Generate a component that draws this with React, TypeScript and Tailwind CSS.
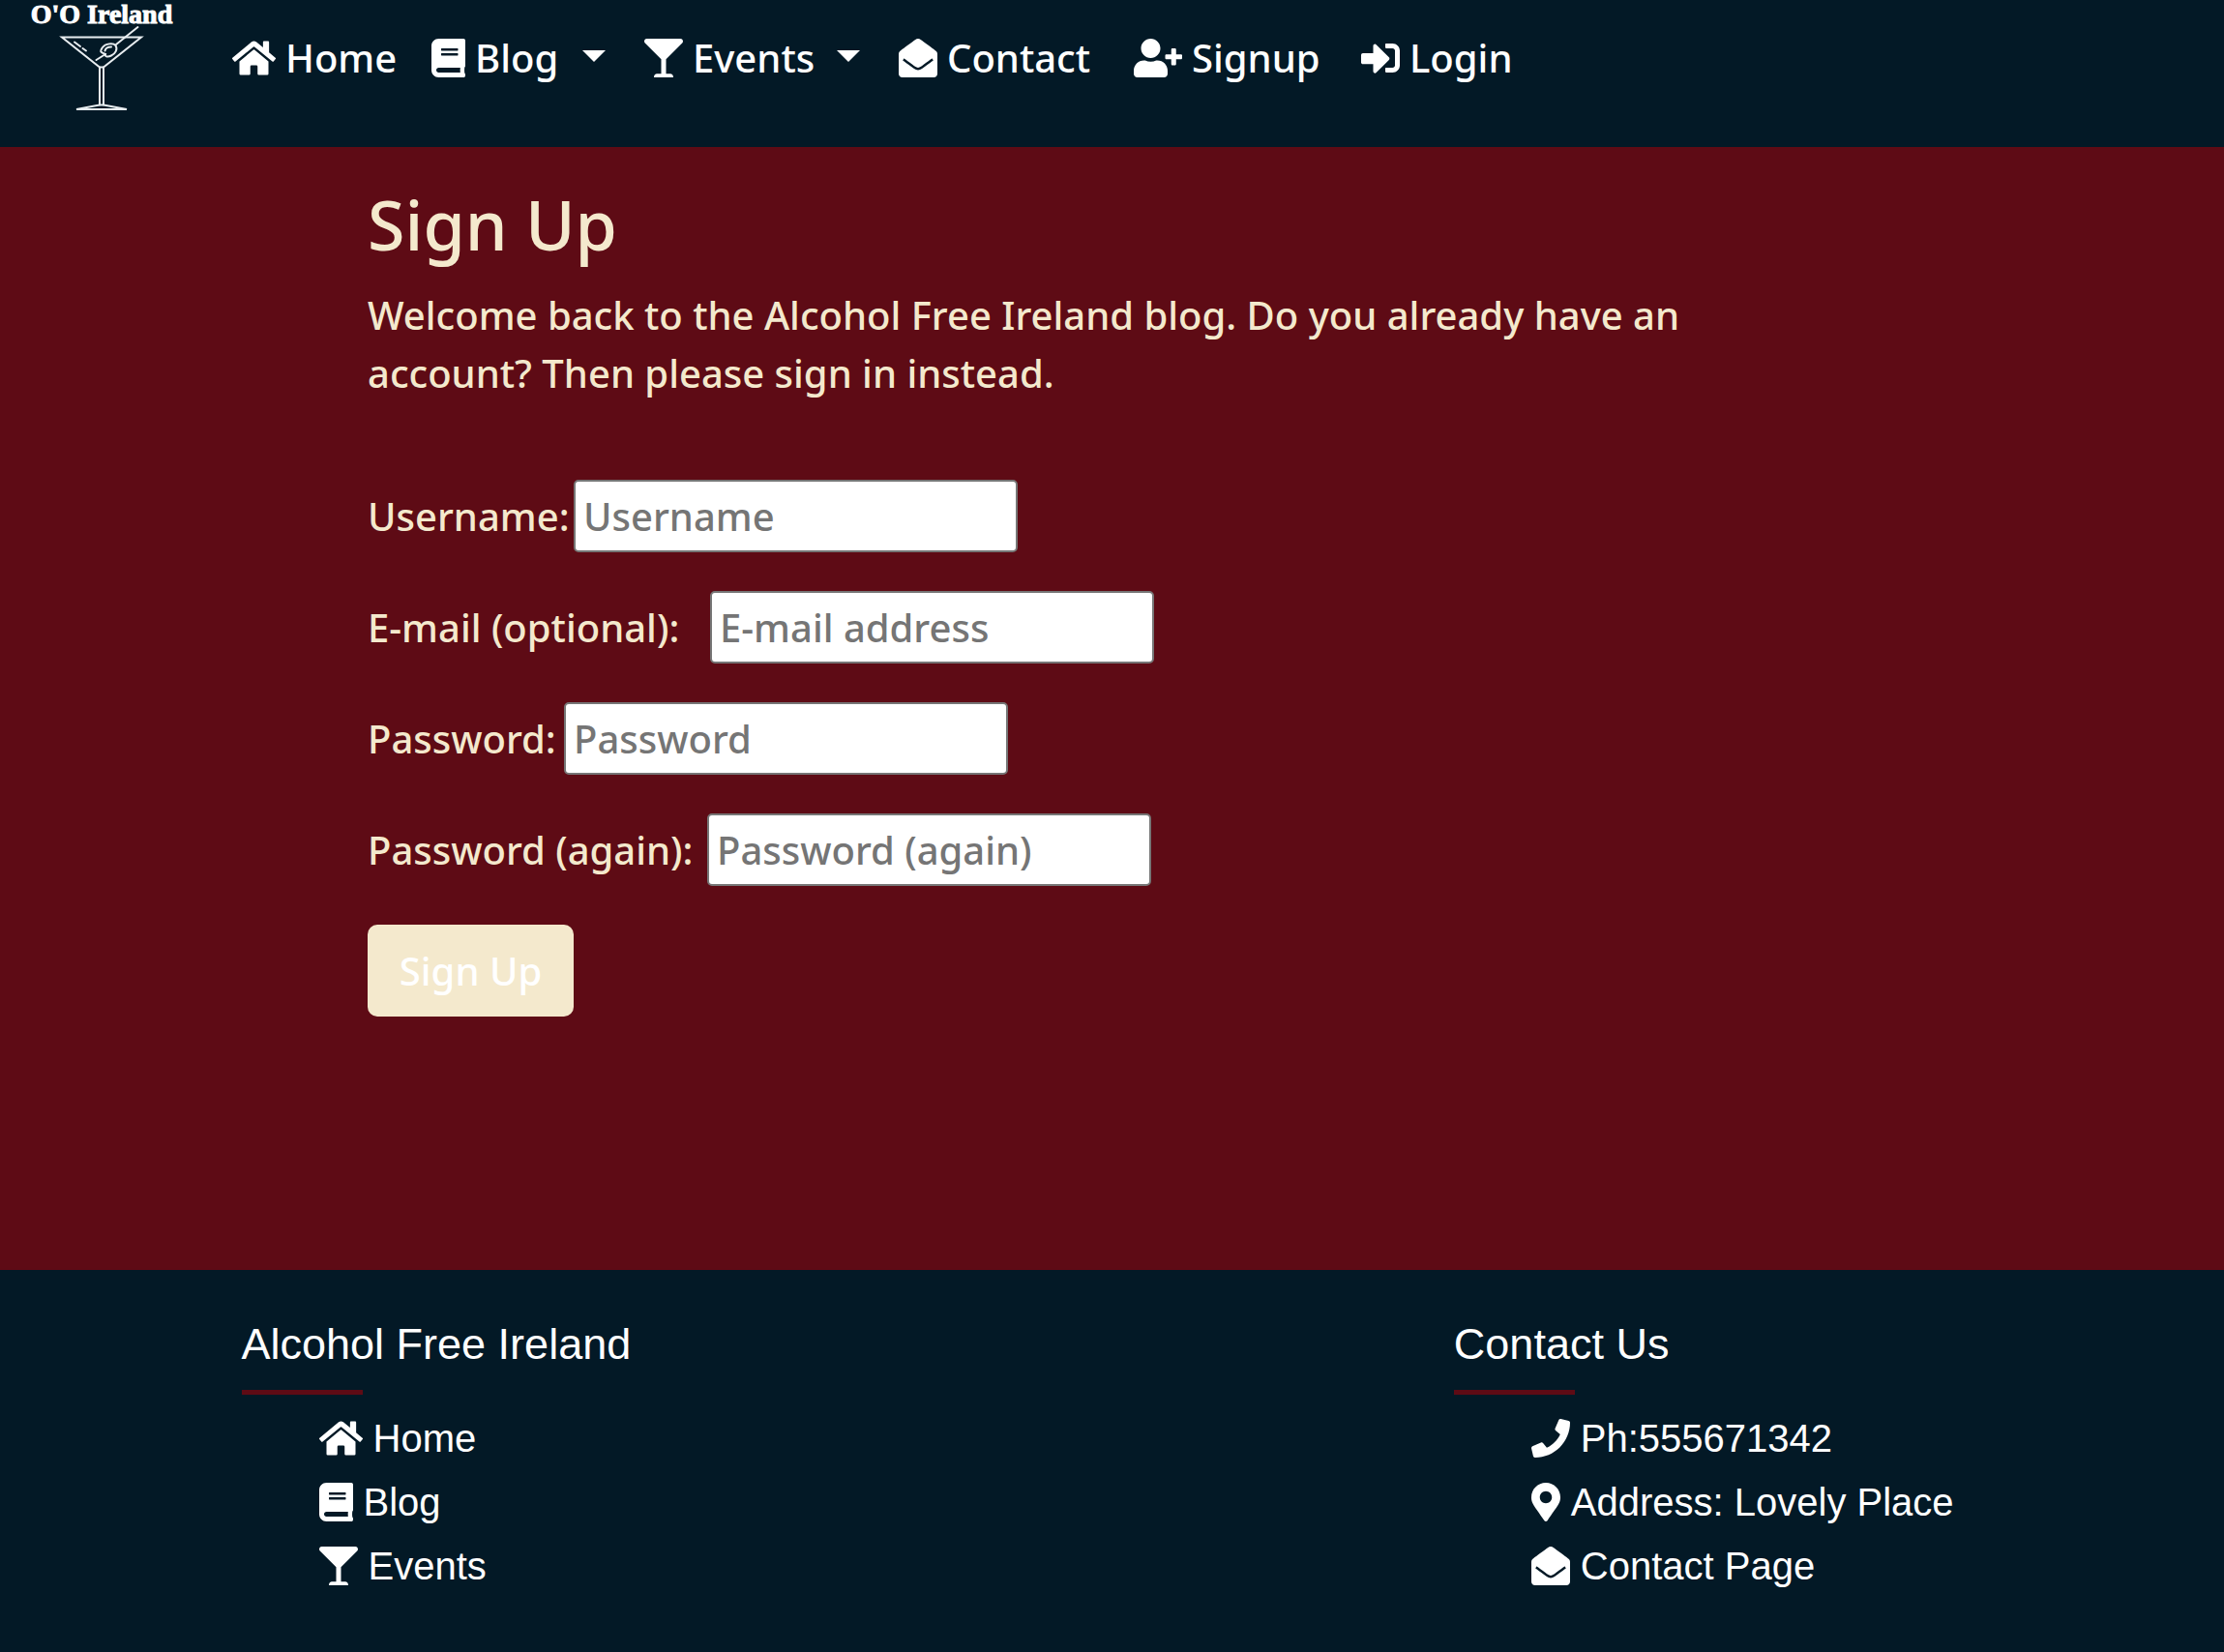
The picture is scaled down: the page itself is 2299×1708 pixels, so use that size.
import type { ReactNode } from "react";
import {
  FaBook,
  FaEnvelopeOpen,
  FaGlassMartini,
  FaHome,
  FaMapMarkerAlt,
  FaPhone,
  FaSignInAlt,
  FaUserPlus,
} from "react-icons/fa";

function Logo() {
  return (
    <svg viewBox="0 0 160 120" className="h-[120px] w-[160px]" role="img" aria-label="O'O Ireland">
      <text
        x="75"
        y="24"
        textAnchor="middle"
        fill="#fff"
        stroke="#fff"
        strokeWidth="1"
        fontFamily="'Liberation Serif', serif"
        fontWeight="700"
        fontSize="28"
      >
        O'O Ireland
      </text>
      <g fill="none" stroke="#e8edf0" strokeWidth="2" strokeLinejoin="miter" strokeLinecap="round">
        <path d="M34 38.500H116L77 69.500H73Z" />
        <path d="M73 69.500V108.500M77 69.500V108.500" />
        <path d="M73 108.500L49 113H101L77 108.500Z" />
        <path d="M47 43.500L53 48M55.500 50L59 52.500" />
        <path d="M112.500 28L90 46M79 56L69.500 62" />
        <path d="M79 56C72 54 74 52 76 49C79 45 87 44 89.500 47C92 51 89 56 85 57.500C82 59 78 59 79 56Z" />
        <path d="M78.500 52.500C79 50 82 48.500 85 48.500" />
      </g>
    </svg>
  );
}

function Caret() {
  return (
    <svg viewBox="0 0 24 12" className="mb-1 ml-auto h-3 w-6 shrink-0 fill-white" aria-hidden="true">
      <path d="M0 0H24L12 12Z" />
    </svg>
  );
}

type LinkItem = { label: string; icon: ReactNode; caret?: boolean; width?: string };

const navLinks: LinkItem[] = [
  { label: "Home", icon: <FaHome className="h-10 w-[45px]" />, width: "w-[206px]" },
  { label: "Blog", icon: <FaBook className="h-10 w-[35px]" />, caret: true, width: "w-[220px]" },
  { label: "Events", icon: <FaGlassMartini className="h-10 w-10" />, caret: true, width: "w-[263px]" },
  { label: "Contact", icon: <FaEnvelopeOpen className="h-10 w-10" />, width: "w-[243px]" },
  { label: "Signup", icon: <FaUserPlus className="h-10 w-[50px]" />, width: "w-[235px]" },
  { label: "Login", icon: <FaSignInAlt className="h-10 w-10" />, width: "w-[195px]" },
];

const siteLinks: LinkItem[] = [
  { label: "Home", icon: <FaHome className="h-10 w-[45px]" /> },
  { label: "Blog", icon: <FaBook className="h-10 w-[35px]" /> },
  { label: "Events", icon: <FaGlassMartini className="h-10 w-10" /> },
];

const contactLinks: LinkItem[] = [
  { label: "Ph:555671342", icon: <FaPhone className="h-10 w-10" /> },
  { label: "Address: Lovely Place", icon: <FaMapMarkerAlt className="h-10 w-[30px]" /> },
  { label: "Contact Page", icon: <FaEnvelopeOpen className="h-10 w-10" /> },
];

const fields = [
  { id: "username", label: "Username:", placeholder: "Username", type: "text", width: "w-[213px]" },
  { id: "email", label: "E-mail (optional):", placeholder: "E-mail address", type: "email", width: "w-[354px]" },
  { id: "password1", label: "Password:", placeholder: "Password", type: "password", width: "w-[203px]" },
  { id: "password2", label: "Password (again):", placeholder: "Password (again)", type: "password", width: "w-[351px]" },
];

function FooterColumn({ title, links, className }: { title: string; links: LinkItem[]; className?: string }) {
  return (
    <section className={className}>
      <h2 className="text-[45px] leading-[54px]">{title}</h2>
      <div className="mt-5 h-[5px] w-[125px] bg-[#5e0b15]" />
      <ul className="mt-3 pl-20">
        {links.map((link) => (
          <li key={link.label} className="h-[66px]">
            <a href="#" className="flex h-[66px] items-center gap-[11px] whitespace-nowrap text-[40px]">
              {link.icon}
              {link.label}
            </a>
          </li>
        ))}
      </ul>
    </section>
  );
}

export default function App() {
  return (
    <div className="flex min-h-screen flex-col bg-[#031926] font-['Noto_Sans',sans-serif] text-[40px] leading-[60px] font-medium text-white">
      <header className="flex h-[152px] items-start pl-[30px]">
        <a href="#" className="mr-[30px] shrink-0">
          <Logo />
        </a>
        <nav className="pt-[30px]">
          <ul className="flex">
            {navLinks.map((link) => (
              <li key={link.label} className={link.width}>
                <a href="#" className="flex items-center px-5 whitespace-nowrap">
                  <span className="mr-2.5 shrink-0">{link.icon}</span>
                  {link.label}
                  {link.caret && <Caret />}
                </a>
              </li>
            ))}
          </ul>
        </nav>
      </header>

      <main className="grow bg-[#5e0b15] px-[380px] pt-[38px] text-[#f4e9cd]">
        <h1 className="text-[70px] leading-[84px]">Sign Up</h1>
        <p className="mt-[22px] max-w-[1460px]">
          Welcome back to the Alcohol Free Ireland blog. Do you already have an account? Then please sign in instead.
        </p>
        <form className="mt-20 flex flex-col items-start gap-10">
          {fields.map((field) => (
            <div key={field.id} className="flex items-center">
              <label htmlFor={field.id} className={`${field.width} shrink-0 whitespace-nowrap`}>
                {field.label}
              </label>
              <input
                id={field.id}
                type={field.type}
                placeholder={field.placeholder}
                className="h-[75px] w-[459px] rounded-[5px] border-2 border-[#767676] bg-white px-2 text-black placeholder:text-[#757575]"
              />
            </div>
          ))}
          <button type="button" className="h-[95px] w-[213px] rounded-[10px] bg-[#f4e9cd] text-white">
            Sign Up
          </button>
        </form>
      </main>

      <footer className="h-[395px] pt-[50px] font-['Liberation_Sans',sans-serif] font-normal">
        <div className="mx-auto grid max-w-[1880px] grid-cols-3">
          <FooterColumn className="col-span-2 px-10" title="Alcohol Free Ireland" links={siteLinks} />
          <FooterColumn className="px-10" title="Contact Us" links={contactLinks} />
        </div>
      </footer>
    </div>
  );
}
